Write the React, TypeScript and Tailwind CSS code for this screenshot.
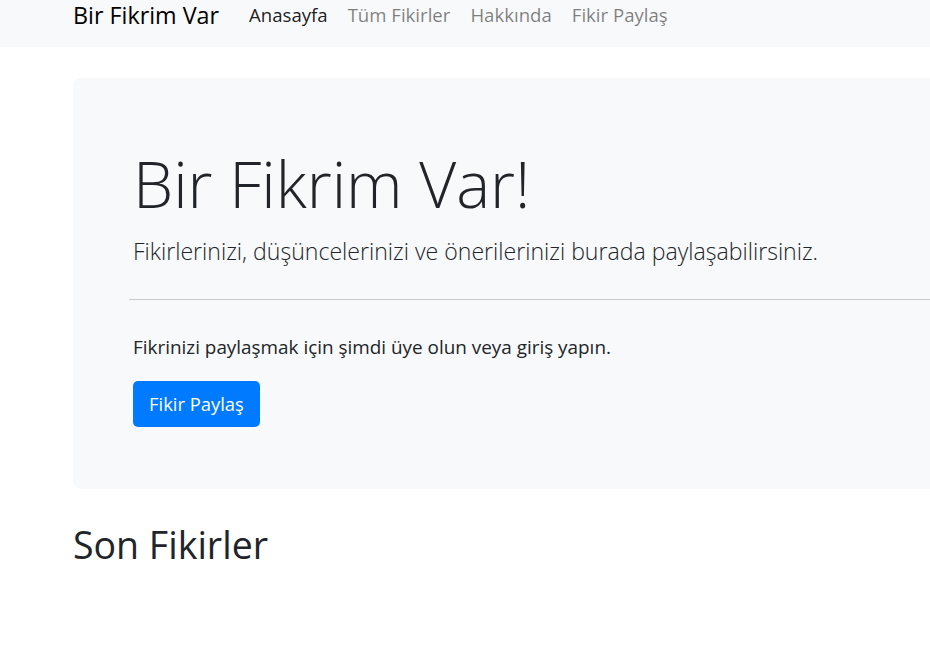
const links = [
  { label: 'Anasayfa', active: true },
  { label: 'Tüm Fikirler', active: false },
  { label: 'Hakkında', active: false },
  { label: 'Fikir Paylaş', active: false },
];

function Navbar() {
  return (
    <nav className="h-[47px] bg-[#f8f9fa] flex items-start pl-[73px]">
      <a href="#" className="text-[23.3px] leading-[30px] text-black mr-[20px] whitespace-nowrap">
        Bir Fikrim Var
      </a>
      <ul className="flex items-start pt-[1px]">
        {links.map((l) => (
          <li key={l.label}>
            <a
              href="#"
              className={
                'block px-[10px] text-[18.6px] leading-[28px] whitespace-nowrap ' +
                (l.active ? 'text-black/90' : 'text-black/50')
              }
            >
              {l.label}
            </a>
          </li>
        ))}
      </ul>
    </nav>
  );
}

export default function App() {
  return (
    <div className="min-h-[651px] w-full overflow-hidden bg-white text-[#212529] font-['Open_Sans',sans-serif]">
      <Navbar />
      <main className="pl-[73px]">
        <section className="w-[1110px] mt-[31px] bg-[#f8f9fa] rounded-[8px] pl-[60px] pt-[62px] pb-[62px]">
          <h1 className="text-[64px] leading-[88px] font-light whitespace-nowrap">Bir Fikrim Var!</h1>
          <p className="mt-[7px] text-[23.1px] leading-[33px] font-light whitespace-nowrap">
            Fikirlerinizi, düşüncelerinizi ve önerilerinizi burada paylaşabilirsiniz.
          </p>
          <hr className="mt-[31px] -ml-[4px] border-t border-[#c8c9ca]" />
          <p className="mt-[35px] text-[18.9px] leading-[25px] whitespace-nowrap">
            Fikrinizi paylaşmak için şimdi üye olun veya giriş yapın.
          </p>
          <a
            href="#"
            className="mt-[21px] inline-flex items-center h-[46px] px-[16px] rounded-[5px] bg-[#007bff] text-white text-[18.4px]"
          >
            Fikir Paylaş
          </a>
        </section>
        <h2 className="mt-[34px] text-[37.5px] leading-[44px] font-normal">Son Fikirler</h2>
      </main>
    </div>
  );
}
